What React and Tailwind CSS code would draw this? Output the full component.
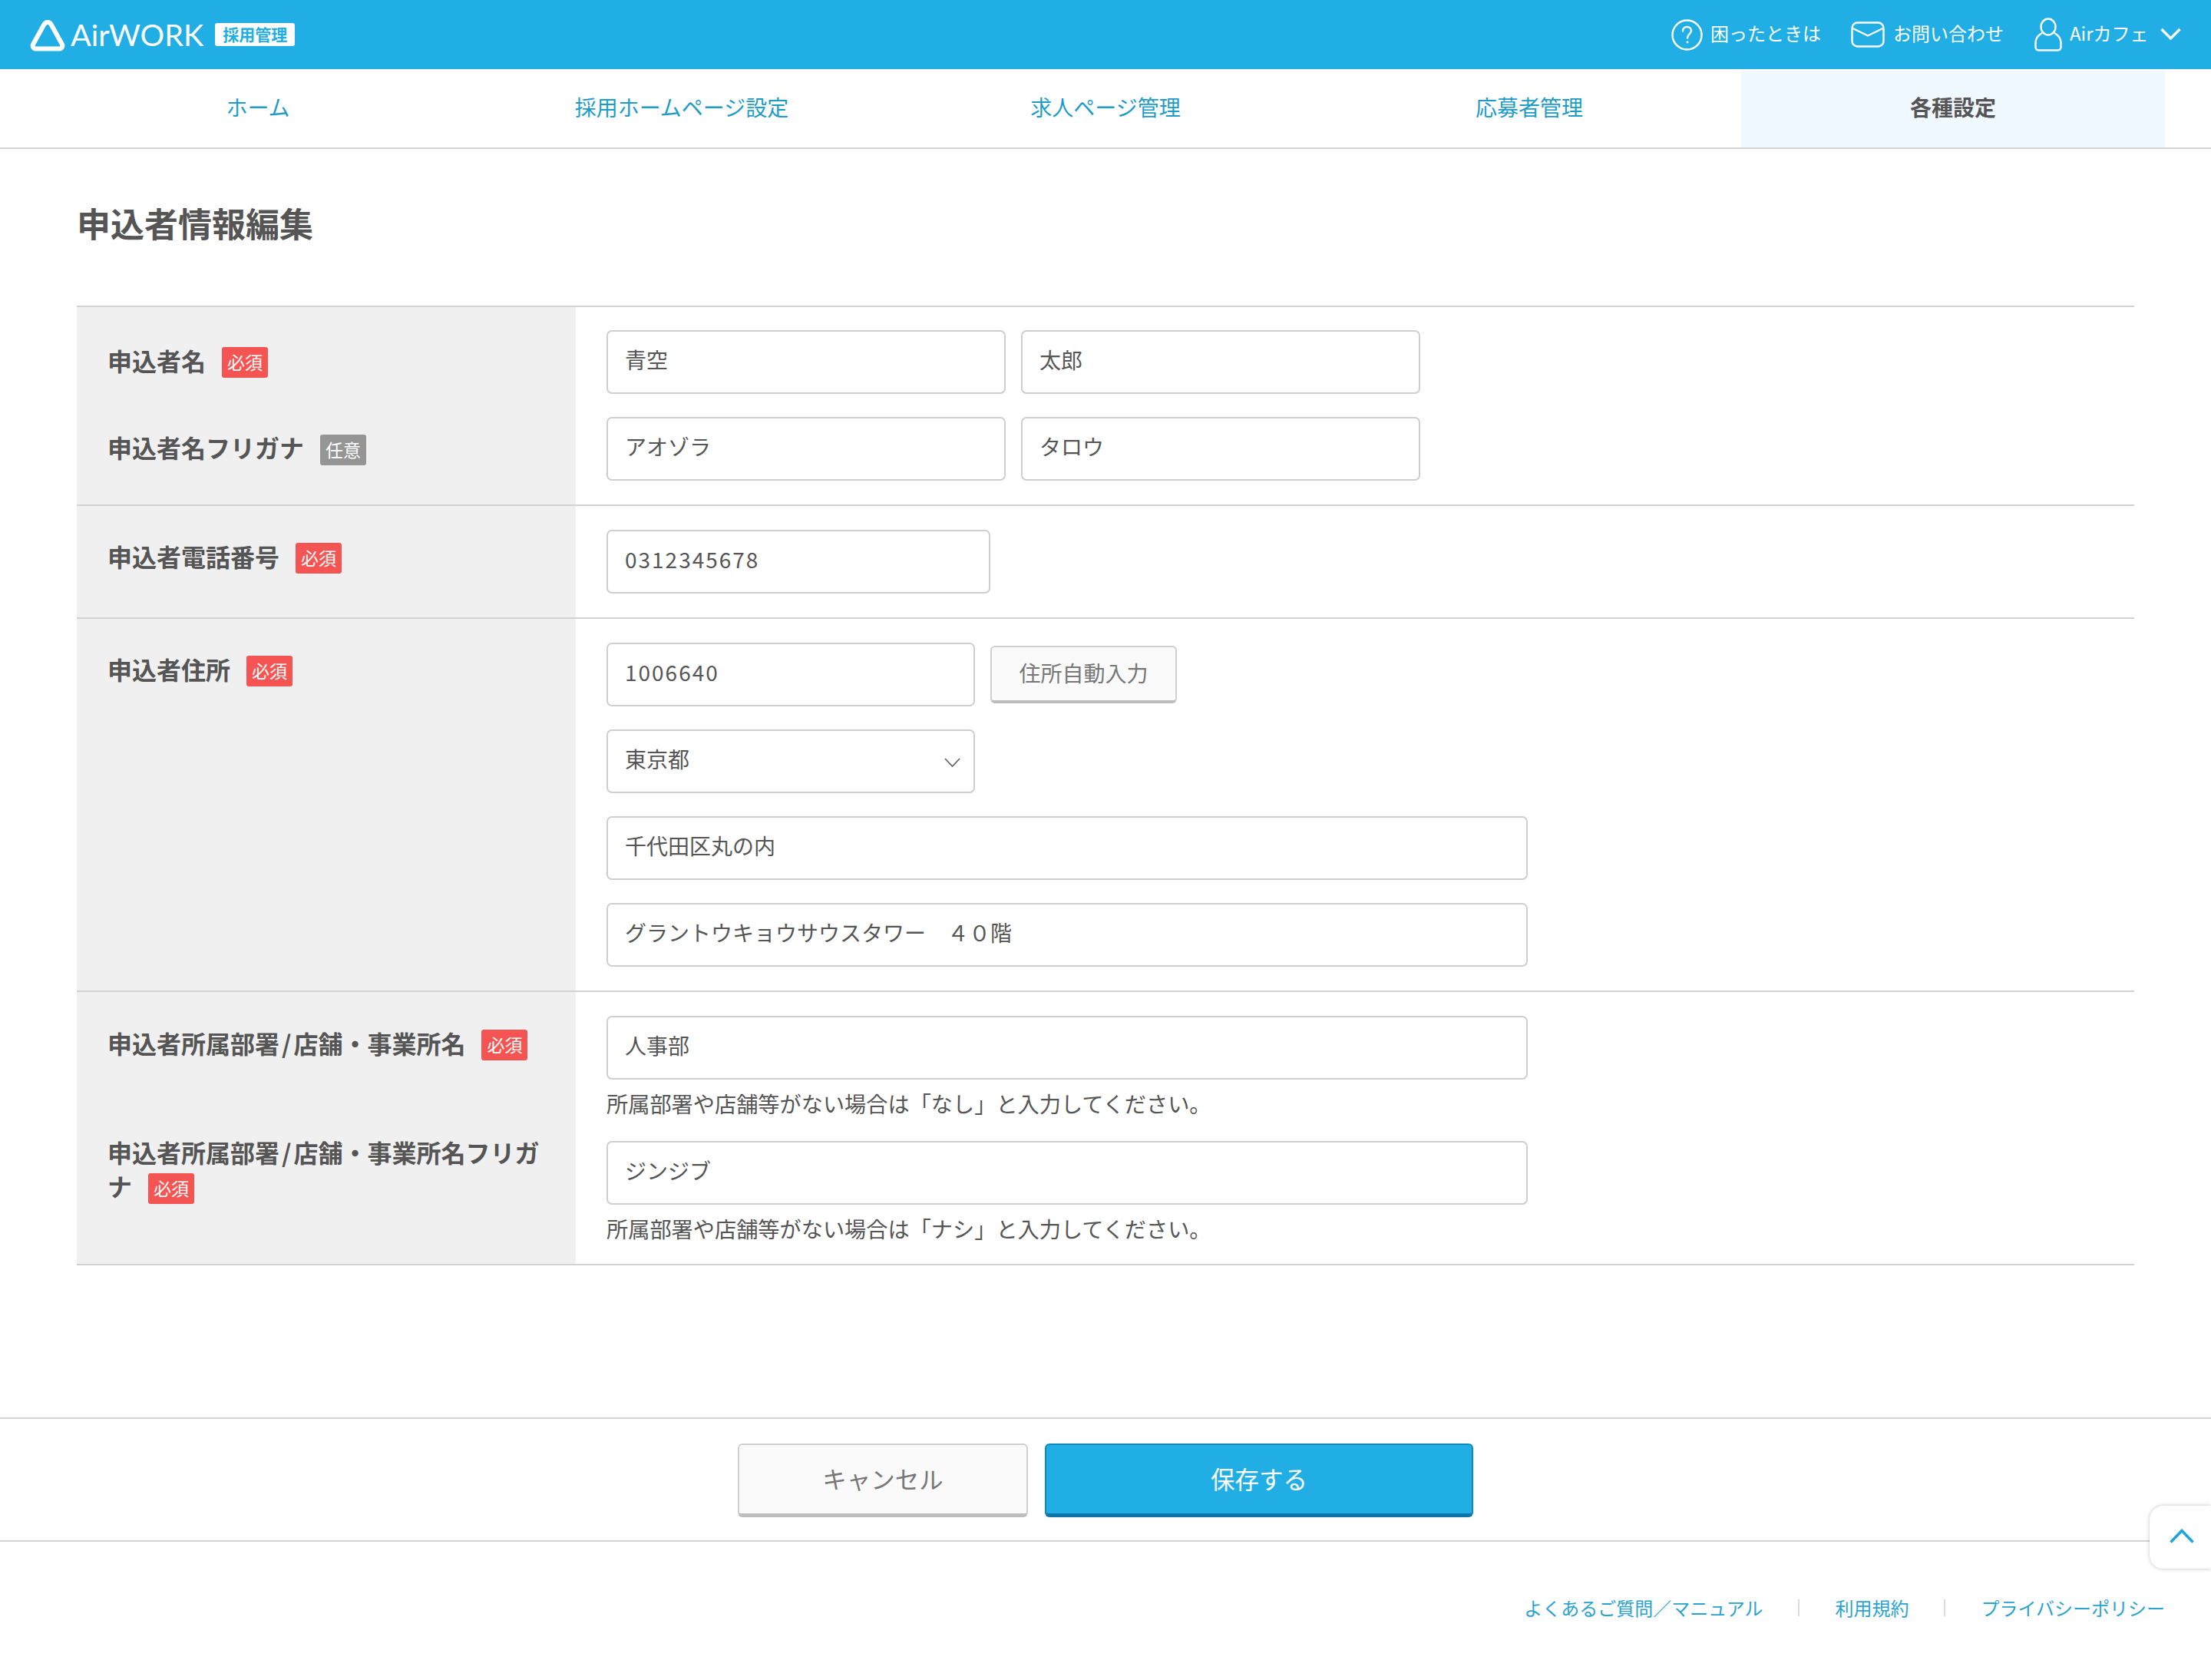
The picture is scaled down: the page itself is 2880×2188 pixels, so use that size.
import React from 'react';

const navItems = ['ホーム', '採用ホームページ設定', '求人ページ管理', '応募者管理', '各種設定'];

function Badge({ optional }) {
  return (
    <span
      className={`inline-block w-[60px] h-[40px] ml-[21px] mb-[4px] align-middle rounded-[3px] text-center text-[23px] leading-[38px] font-normal text-white ${
        optional ? 'bg-[#959595]' : 'bg-[#f55552]'
      }`}
    >
      {optional ? '任意' : '必須'}
    </span>
  );
}

function Label({ children, optional, className = '' }) {
  return (
    <div className={`text-[32px] leading-[44px] font-bold text-[#555] ${className}`}>
      {children}
      <Badge optional={optional} />
    </div>
  );
}

function Field({ value, className = '', wide }) {
  return (
    <input
      readOnly
      value={value}
      className={`block h-[83px] pl-[22px] pb-[8px] border-2 border-[#cfcfcf] rounded-[7px] bg-white text-[28px] text-[#555] outline-none ${
        wide ? 'tracking-[2px]' : ''
      } ${className}`}
    />
  );
}

function Row({ labels, children, top = 'pt-[31px]', bottom = 'pb-[31px]' }) {
  return (
    <div className="flex border-b-2 border-[#d2d2d2]">
      <div className={`w-[650px] shrink-0 bg-[#f0f0f0] pl-[40px] pr-[40px] ${top} ${bottom}`}>{labels}</div>
      <div className={`flex-1 pl-[40px] ${top} ${bottom}`}>{children}</div>
    </div>
  );
}

function Help({ children, className = '' }) {
  return <p className={`mt-[12px] text-[28.2px] leading-[38px] text-[#555] ${className}`}>{children}</p>;
}

function Header() {
  return (
    <header className="h-[90px] bg-[#20aee5] flex items-center justify-between pl-[39px] pr-[39px] text-white">
      <div className="flex items-center">
        <svg width="46" height="42" viewBox="0 0 46 42" fill="none" className="mt-[2px]">
          <path
            d="M23 4 C25.5 4 27 5.5 28 7.5 L41.5 32 C43.5 35.5 41.5 38.5 37.5 38.5 L8.5 38.5 C4.5 38.5 2.5 35.5 4.5 32 L18 7.5 C19 5.5 20.5 4 23 4 Z"
            stroke="#fff"
            strokeWidth="6"
            strokeLinejoin="round"
          />
        </svg>
        <span className="ml-[7px] font-['Lato',sans-serif] text-[39.5px] leading-none font-normal">
          AirWORK
        </span>
        <span className="ml-[15px] w-[104px] h-[30px] rounded-[3px] bg-white text-[#20aee5] text-[21px] leading-[29px] font-bold text-center">
          採用管理
        </span>
      </div>
      <div className="flex items-center text-[24px] font-normal">
        <svg width="41" height="41" viewBox="0 0 41 41" fill="none" stroke="#fff" strokeWidth="2.4">
          <circle cx="20.5" cy="20.5" r="19" />
          <path d="M15 15.5 C15 12 17.5 10 20.5 10 C24 10 26 12.3 26 15 C26 19 21 19.5 21 24.5" strokeLinecap="round" />
          <circle cx="21" cy="30" r="1.4" fill="#fff" stroke="none" />
        </svg>
        <span className="ml-[10px] pb-[4px]">困ったときは</span>
        <svg className="ml-[39px]" width="44" height="34" viewBox="0 0 44 34" fill="none" stroke="#fff" strokeWidth="2.4">
          <rect x="1.5" y="1.5" width="41" height="31" rx="7" />
          <path d="M2.5 9 L22 18.5 L41.5 9" strokeLinejoin="round" />
        </svg>
        <span className="ml-[11px] pb-[4px]">お問い合わせ</span>
        <svg className="ml-[40px]" width="36" height="44" viewBox="0 0 36 44" fill="none" stroke="#fff" strokeWidth="2.4">
          <ellipse cx="18" cy="12" rx="9.5" ry="10.5" />
          <path d="M10 20 C4.5 23 1.5 27 1.5 33 L1.5 38 C1.5 41 3.5 42.5 6 42.5 L30 42.5 C32.5 42.5 34.5 41 34.5 38 L34.5 33 C34.5 27 31.5 23 26 20" />
        </svg>
        <span className="ml-[10px] w-[102px] pb-[4px] whitespace-nowrap">Airカフェ</span>
        <svg className="ml-[16px] mb-[2px]" width="27" height="16" viewBox="0 0 27 16" fill="none" stroke="#fff" strokeWidth="3.4">
          <path d="M1.5 2 L13.5 14 L25.5 2" />
        </svg>
      </div>
    </header>
  );
}

function Nav() {
  return (
    <nav className="flex h-[104px] px-[60px] pt-[2px] border-b-2 border-[#d4d4d4]">
      {navItems.map((item, i) =>
        i === navItems.length - 1 ? (
          <div key={item} className="w-[552px] pb-[7px] flex items-center justify-center bg-[#f0f9ff] text-[28px] font-bold text-[#555]">
            {item}
          </div>
        ) : (
          <a key={item} className="w-[552px] pb-[7px] flex items-center justify-center text-[28px] text-[#1e9cc9]">
            {item}
          </a>
        )
      )}
    </nav>
  );
}

export default function App() {
  return (
    <div className="relative w-full min-h-[2188px] bg-white font-['Noto_Sans_CJK_JP',sans-serif]">
      <Header />
      <Nav />

      <main className="px-[100px]">
        <h1 className="pt-[66px] pb-[78px] text-[44px] leading-[60px] font-bold text-[#555]">申込者情報編集</h1>

        <div className="border-t-2 border-[#d2d2d2]">
          <Row
            top="pt-[30px]"
            labels={
              <>
                <Label className="mt-[17px]">申込者名</Label>
                <Label optional className="mt-[64px]">申込者名フリガナ</Label>
              </>
            }
          >
            <div className="flex gap-[20px]">
              <Field value="青空" className="w-[520px]" />
              <Field value="太郎" className="w-[520px]" />
            </div>
            <div className="flex gap-[20px] mt-[30px]">
              <Field value="アオゾラ" className="w-[520px]" />
              <Field value="タロウ" className="w-[520px]" />
            </div>
          </Row>

          <Row labels={<Label className="mt-[12px]">申込者電話番号</Label>}>
            <Field value="0312345678" wide className="w-[500px]" />
          </Row>

          <Row labels={<Label className="mt-[12px]">申込者住所</Label>}>
            <div className="flex items-center gap-[20px]">
              <Field value="1006640" wide className="w-[480px]" />
              <button className="w-[243px] h-[75px] pb-[4px] border-2 border-b-[4px] border-[#cfcfcf] border-b-[#bdbdbd] rounded-[6px] bg-[#fafafa] text-[28px] text-[#777]">
                住所自動入力
              </button>
            </div>
            <div className="relative w-[480px] mt-[30px]">
              <select className="block w-full h-[83px] pl-[22px] pb-[8px] appearance-none border-2 border-[#cfcfcf] rounded-[7px] bg-white text-[28px] text-[#555] outline-none">
                <option>東京都</option>
              </select>
              <svg className="absolute right-[19px] top-[37px]" width="21" height="12" viewBox="0 0 21 12" fill="none" stroke="#666" strokeWidth="1.8">
                <path d="M1 1 L10.5 11 L20 1" />
              </svg>
            </div>
            <Field value="千代田区丸の内" className="w-[1200px] mt-[30px]" />
            <Field value="グラントウキョウサウスタワー　４０階" className="w-[1200px] mt-[30px]" />
          </Row>

          <Row
            bottom="pb-[27px]"
            labels={
              <>
                <Label className="mt-[13px]">申込者所属部署<span className="mx-[3px]">/</span>店舗・事業所名</Label>
                <Label className="mt-[93px]">申込者所属部署<span className="mx-[3px]">/</span>店舗・事業所名フリガナ</Label>
              </>
            }
          >
            <Field value="人事部" className="w-[1200px]" />
            <Help className="mb-[30px]">所属部署や店舗等がない場合は「なし」と入力してください。</Help>
            <Field value="ジンジブ" className="w-[1200px]" />
            <Help>所属部署や店舗等がない場合は「ナシ」と入力してください。</Help>
          </Row>
        </div>
      </main>

      <div className="mt-[198px] pt-[32px] pb-[30px] border-y-2 border-[#d4d4d4] flex justify-center gap-[22px]">
        <button className="w-[378px] h-[96px] pb-[2px] border-2 border-b-[5px] border-[#cfcfcf] border-b-[#bdbdbd] rounded-[6px] bg-[#fafafa] text-[31.5px] text-[#777]">
          キャンセル
        </button>
        <button className="w-[558px] h-[96px] pb-[2px] border-2 border-b-[5px] border-[#1189bb] border-b-[#0a77a8] rounded-[6px] bg-[#20aee5] text-[31.5px] text-white">
          保存する
        </button>
      </div>

      <footer className="flex justify-end items-center pt-[68px] pr-[60px] text-[24px] leading-[36px] text-[#2aa3d2]">
        <a>よくあるご質問／マニュアル</a>
        <span className="w-[2px] h-[22px] mx-[46px] bg-[#dcdcdc]" />
        <a>利用規約</a>
        <span className="w-[2px] h-[22px] mx-[46px] bg-[#dcdcdc]" />
        <a>プライバシーポリシー</a>
      </footer>

      {/* page top button */}
      <button className="fixed right-0 bottom-[145px] w-[80px] h-[82px] flex items-center justify-center pl-[3px] pb-[4px] bg-white rounded-l-[18px] shadow-[0_0_5px_rgba(0,0,0,0.25)]">
        <svg width="32" height="19" viewBox="0 0 32 19" fill="none" stroke="#1ea6dc" strokeWidth="3.6">
          <path d="M1.5 17.5 L16 2.5 L30.5 17.5" />
        </svg>
      </button>
    </div>
  );
}
